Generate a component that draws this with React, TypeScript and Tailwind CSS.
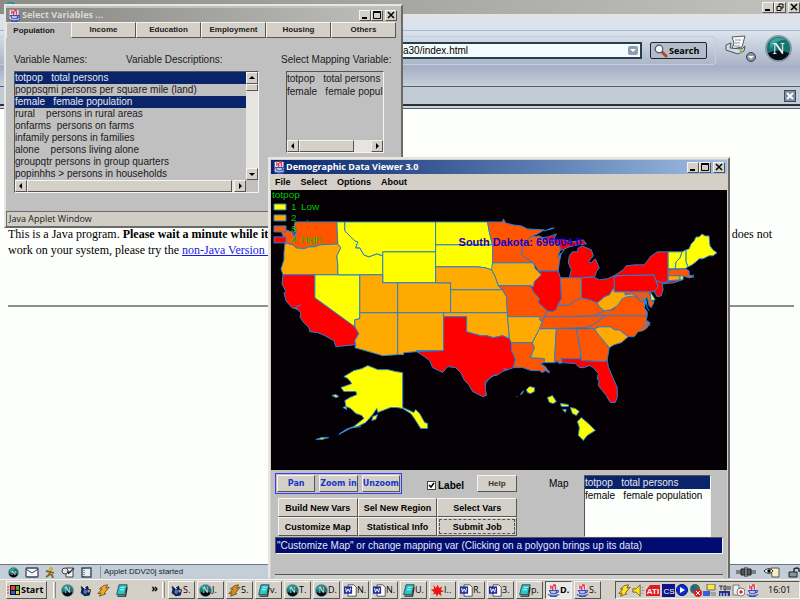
import React from 'react';

type Tone = 'yellow' | 'amber' | 'orange' | 'red';

const toneFill: Record<Tone, string> = {
    yellow: '#ffff00',
    amber: '#ffaa00',
    orange: '#ff5500',
    red: '#ff0000',
};

// One outline per state, in map canvas units
const states: { id: string; tone: Tone; points: string }[] = [
    { id: 'WA', tone: 'orange', points: '295,222 337,222 338,244 327,245 320,245 315,247 309,247 304,249 296,248 293,245 285,243 284,238 281,231 286,230 292,232 294,236 296,233 294,228' },
    { id: 'OR', tone: 'amber', points: '285,243 293,245 296,248 304,249 309,247 315,247 320,245 338,244 341,248 339,253 337,256 338,265 338,275 283,275 281,269 284,260 284,253' },
    { id: 'CA', tone: 'red', points: '283,275 315,275 315,298 355,327 359,334 355,341 356,345 336,347 334,341 325,336 318,333 310,332 309,328 303,322 300,317 301,313 296,309 292,308 286,301 284,293 286,292 282,284' },
    { id: 'NV', tone: 'yellow', points: '315,275 360,275 360,319 355,320 355,327 315,298' },
    { id: 'ID', tone: 'yellow', points: '337,222 345,222 345,231 351,237 355,241 358,242 356,248 360,248 364,255 369,257 377,254 383,256 383,275 338,275 338,265 337,256 341,248 338,244' },
    { id: 'MT', tone: 'yellow', points: '345,222 436,222 436,252 383,252 383,256 377,254 369,257 364,255 360,248 356,248 358,242 355,241 351,237 345,231' },
    { id: 'WY', tone: 'yellow', points: '383,252 436,252 436,283 383,283' },
    { id: 'UT', tone: 'amber', points: '360,275 383,275 383,283 398,283 398,313 360,313' },
    { id: 'CO', tone: 'amber', points: '398,283 451,283 451,313 398,313' },
    { id: 'AZ', tone: 'amber', points: '360,313 398,313 398,355 383,356 355,348 356,345 355,341 359,334 355,327 355,320 360,319' },
    { id: 'NM', tone: 'amber', points: '398,313 444,313 444,351 417,351 417,352 404,353 404,355 398,355' },
    { id: 'ND', tone: 'yellow', points: '436,222 488,222 490,233 493,245 436,245' },
    { id: 'SD', tone: 'yellow', points: '436,245 493,245 493,263 494,268 492,270 486,268 478,267 436,267' },
    { id: 'NE', tone: 'amber', points: '436,267 478,267 486,268 492,270 496,277 499,286 503,290 451,290 451,283 436,283' },
    { id: 'KS', tone: 'amber', points: '451,290 503,290 507,297 508,313 451,313' },
    { id: 'OK', tone: 'amber', points: '444,313 508,313 509,325 510,339 503,336 494,338 487,336 481,336 474,334 467,332 467,317 444,317' },
    { id: 'TX', tone: 'red', points: '444,317 467,317 467,332 474,334 481,336 487,336 494,338 503,336 510,339 512,343 512,350 516,360 514,368 503,372 497,376 494,376 486,382 486,390 487,396 483,397 473,392 469,385 465,381 461,373 456,368 448,367 443,373 439,371 433,368 430,361 422,355 417,352 444,351' },
    { id: 'MN', tone: 'orange', points: '488,222 503,222 504,219 506,223 514,225 522,226 528,229 545,230 538,234 531,237 527,242 523,245 523,250 522,255 528,259 534,263 493,263 493,245 490,233' },
    { id: 'IA', tone: 'amber', points: '493,263 534,263 536,269 542,275 535,282 534,287 531,286 499,286 495,275 492,270' },
    { id: 'MO', tone: 'orange', points: '499,286 531,286 534,292 540,299 539,303 548,311 545,317 543,322 540,320 541,317 508,317 507,297 503,290' },
    { id: 'AR', tone: 'amber', points: '508,317 541,317 540,320 543,322 540,330 536,337 533,343 512,343 510,339' },
    { id: 'LA', tone: 'orange', points: '512,343 533,343 535,348 531,358 545,359 545,363 541,364 546,367 550,373 546,371 543,373 540,371 532,371 523,368 514,368 516,360 512,350' },
    { id: 'MS', tone: 'amber', points: '540,329 557,329 555,363 545,363 545,359 531,358 535,348 533,343 536,337' },
    { id: 'AL', tone: 'orange', points: '557,329 577,329 581,350 581,359 562,359 563,363 560,364 558,361 555,363' },
    { id: 'GA', tone: 'orange', points: '577,329 595,329 600,336 610,348 608,360 606,362 582,361 581,350' },
    { id: 'FL', tone: 'red', points: '562,359 581,359 582,361 606,362 608,360 609,367 614,379 618,388 618,398 616,403 611,403 607,396 603,391 599,386 600,381 598,380 599,374 594,368 590,366 585,368 580,368 576,364 563,363' },
    { id: 'SC', tone: 'amber', points: '595,329 600,327 612,327 615,330 620,330 629,337 622,343 615,345 610,348 600,336' },
    { id: 'NC', tone: 'orange', points: '606,316 648,316 647,321 651,323 648,328 644,331 639,332 635,337 629,337 620,330 615,330 612,327 600,327 595,329 586,328 594,325' },
    { id: 'TN', tone: 'orange', points: '545,317 606,316 594,325 586,328 540,329 543,322' },
    { id: 'KY', tone: 'orange', points: '548,311 553,312 558,306 570,305 575,301 582,298 590,300 598,303 600,307 605,311 595,316 545,317' },
    { id: 'VA', tone: 'orange', points: '595,316 605,311 614,310 618,305 623,298 633,294 637,297 641,301 646,303 645,308 648,312 648,316' },
    { id: 'WV', tone: 'amber', points: '615,287 615,292 626,292 626,295 635,293 637,296 628,297 623,299 618,306 612,310 605,311 600,307 598,303 605,297 610,295' },
    { id: 'MD', tone: 'orange', points: '626,292 650,292 652,301 655,302 652,308 650,306 648,297 645,302 641,301 637,296 632,294 626,295' },
    { id: 'DE', tone: 'yellow', points: '651,292 653,295 656,300 652,301' },
    { id: 'PA', tone: 'red', points: '615,276 655,275 657,281 659,287 655,292 615,292' },
    { id: 'NJ', tone: 'red', points: '657,281 663,283 664,290 662,296 658,297 655,292 659,287' },
    { id: 'NY', tone: 'red', points: '615,276 624,270 627,266 636,265 645,265 649,260 651,257 658,252 669,252 669,281 664,283 657,281 655,275' },
    { id: 'LI', tone: 'red', points: '664,284 671,281 683,280 675,283' },
    { id: 'VT', tone: 'yellow', points: '669,252 683,252 681,258 677,262 676,269 669,269' },
    { id: 'NH', tone: 'yellow', points: '683,252 687,250 687,262 689,267 686,269 676,269 677,262 681,258' },
    { id: 'ME', tone: 'yellow', points: '687,250 690,249 692,244 695,241 697,237 700,237 703,234 706,236 710,236 711,246 714,250 718,253 714,256 710,256 704,259 700,259 697,262 693,265 689,267 687,262' },
    { id: 'MA', tone: 'orange', points: '669,270 686,269 690,271 690,275 695,277 690,278 683,276 669,276' },
    { id: 'CT', tone: 'amber', points: '669,276 681,276 681,280 669,281' },
    { id: 'RI', tone: 'yellow', points: '681,276 684,276 684,280 681,280' },
    { id: 'OH', tone: 'red', points: '582,278 594,277 600,280 608,279 615,276 615,287 610,295 605,297 598,303 590,300 582,298' },
    { id: 'IN', tone: 'orange', points: '561,278 582,278 582,298 575,301 570,305 558,306 562,299' },
    { id: 'IL', tone: 'red', points: '539,271 559,271 561,278 562,299 558,306 557,310 553,312 548,311 539,303 540,299 534,292 531,286 534,287 535,282 542,275' },
    { id: 'WI', tone: 'orange', points: '531,237 540,236 545,239 553,241 560,245 561,250 558,258 562,253 560,262 559,271 539,271 534,263 528,259 522,255 523,250 523,245' },
    { id: 'UP', tone: 'red', points: '541,238 549,237 557,234 554,240 565,240 573,242 584,240 587,244 578,245 570,247 563,250 561,250 560,245 553,241 545,239' },
    { id: 'MI', tone: 'red', points: '570,278 572,270 569,263 570,256 573,252 578,252 579,248 583,246 592,250 594,256 589,262 592,263 596,259 600,268 597,272 596,276 594,277 582,278' },
    { id: 'AK', tone: 'yellow', points: '354,371 362,369 368,366 373,368 378,370 388,370 396,372 403,373 403,408 410,411 414,413 416,410 420,414 425,423 428,424 428,429 421,429 414,418 411,414 403,409 397,408 391,408 383,411 378,413 377,409 373,415 366,423 358,427 350,429 339,435 346,430 354,427 364,419 362,416 356,414 351,409 346,407 345,401 350,398 357,395 356,392 344,392 341,388 352,384 348,379 344,377' },
    { id: 'AK-kodiak', tone: 'yellow', points: '372,421 373,417 378,415 376,420' },
    { id: 'AK-lawrence', tone: 'yellow', points: '332,396 336,395 339,397 336,398' },
    { id: 'AK-nunivak', tone: 'yellow', points: '343,408 346,407 347,410' },
    { id: 'AK-west', tone: 'yellow', points: '316,440 322,438 329,438 322,440' },
    { id: 'HI-1', tone: 'yellow', points: '521,395 524,391 523,394' },
    { id: 'HI-2', tone: 'yellow', points: '527,390 530,387 535,388 535,392 531,394 528,393' },
    { id: 'HI-3', tone: 'yellow', points: '548,398 553,396 557,402 554,404 550,403' },
    { id: 'HI-4', tone: 'yellow', points: '561,404 569,405 569,407 562,407' },
    { id: 'HI-5', tone: 'yellow', points: '571,408 576,409 580,412 577,416 573,414' },
    { id: 'HI-6', tone: 'yellow', points: '578,422 582,418 589,424 596,431 588,436 584,441 579,436 580,428' },
    { id: 'HI-7', tone: 'yellow', points: '563,410 567,410 566,413' },
];

const legend: { tone: Tone; n: string; label: string }[] = [
    { tone: 'yellow', n: '1', label: 'Low' },
    { tone: 'amber', n: '2', label: '.' },
    { tone: 'orange', n: '3', label: '.' },
    { tone: 'red', n: '4', label: 'High' },
];

const variables = [
    { text: 'totpop   total persons', on: true },
    { text: 'poppsqmi persons per square mile (land)', on: false },
    { text: 'female   female population', on: true },
    { text: 'rural    persons in rural areas', on: false },
    { text: 'onfarms  persons on farms', on: false },
    { text: 'infamily persons in families', on: false },
    { text: 'alone    persons living alone', on: false },
    { text: 'groupqtr persons in group quarters', on: false },
    { text: 'popinhhs > persons in households', on: false },
];

const raised = 'border border-t-[#f4f4f0] border-l-[#f4f4f0] border-r-[#555] border-b-[#555] bg-[#d4d0c8]';
const sunken = 'border border-t-[#555] border-l-[#555] border-r-[#f4f4f0] border-b-[#f4f4f0]';

/* ---------- icons ---------- */

const JavaIcon: React.FC = () => (
    <svg width="13" height="13" viewBox="0 0 16 16" className="shrink-0">
        <path d="M2 1h11v13H2z" fill="#e9e6f4" />
        <path d="M8 0c3 2-3 3-1 5 1 1-1 2-1 2M11 1c-3 2 1 3-1 6M4 2c2 1 0 3 1 4" stroke="#e8323c" strokeWidth="1.6" fill="none" />
        <path d="M3 8h9l-1 4H5zM12 8c3-1 3 3-1 3M1 13c4 2 10 2 14 0M4 15.5h8" stroke="#3c4fb0" strokeWidth="1.3" fill="#b9c2ee" />
    </svg>
);

const NetscapeIcon: React.FC<{ size?: number }> = ({ size = 13 }) => (
    <svg width={size} height={size} viewBox="0 0 28 28" className="shrink-0">
        <circle cx="14" cy="14" r="13" fill="#12756f" stroke="#8a98a8" strokeWidth="2" />
        <path d="M5 8a11 11 0 0 1 16-3c-6 0-12 3-15 10z" fill="#3aa59c" />
        <path d="M3 19c7-4 15-4 22 0a12 12 0 0 1-22 0z" fill="#050d12" />
        <text x="14" y="20" textAnchor="middle" fontSize="18" fontFamily="Liberation Serif, serif" fill="#fff">N</text>
    </svg>
);

const NoteIcon: React.FC = () => (
    <svg width="13" height="13" viewBox="0 0 16 16" className="shrink-0">
        <path d="M5 1h10l-3 12H2z" fill="#27c7cc" stroke="#123c48" />
        <path d="M7 4h5M6 7h5" stroke="#eaffff" />
        <path d="M3 15h10l2-11" stroke="#222" fill="none" strokeWidth="1.5" />
    </svg>
);

const WordIcon: React.FC = () => (
    <svg width="13" height="13" viewBox="0 0 16 16" className="shrink-0">
        <path d="M5 1h7l3 3v11H5z" fill="#fff" stroke="#333" />
        <path d="M0 3h10v9H0z" fill="#1c2c9c" />
        <path d="M2 5l1 5 2-4 2 4 1-5" stroke="#fff" fill="none" strokeWidth="1.2" />
    </svg>
);

const BoltIcon: React.FC<{ fill?: string }> = ({ fill = '#ffe12b' }) => (
    <svg width="13" height="13" viewBox="0 0 16 16" className="shrink-0">
        <path d="M8 2l5-1-2 4 4-1-6 7 2 1-8 3 2-4-4 1 5-6H3z" fill={fill} stroke="#6a4a10" strokeWidth="1" />
    </svg>
);

const MouseIcon: React.FC = () => (
    <svg width="13" height="13" viewBox="0 0 16 16" className="shrink-0">
        <path d="M2 2l4 3 5-3 1 4 3 1-2 7-6 1-5-4 1-4z" fill="#14204c" />
        <path d="M7 6l4 3-3 4-3-3z" fill="#3a78d8" />
        <path d="M10 7l4 1-2 3z" fill="#f2a35c" />
        <path d="M6 4l2 2" stroke="#fff" strokeWidth="1.5" />
    </svg>
);

const SplatIcon: React.FC = () => (
    <svg width="13" height="13" viewBox="0 0 16 16" className="shrink-0">
        <path d="M3 1l3 4 2-4 2 4 4-2-2 4 4 2-4 1 1 5-4-3-2 4-1-4-4 1 2-3-4-3 4-1z" fill="#f01414" />
    </svg>
);

const MailIcon: React.FC = () => (
    <svg width="14" height="11" viewBox="0 0 14 11">
        <rect x="1" y="1" width="12" height="9" rx="1" fill="#f3f6fa" stroke="#3c4858" strokeWidth="1.3" />
        <path d="M1 2l6 4 6-4" fill="none" stroke="#3c4858" />
    </svg>
);

const RunnerIcon: React.FC = () => (
    <svg width="10" height="11" viewBox="0 0 10 11">
        <circle cx="6" cy="2" r="2" fill="#dba928" />
        <path d="M1 4l5 1 3 1M5 5l-1 3-3 2M4 7l3 1 1 3" stroke="#7d6420" strokeWidth="1.8" fill="none" />
    </svg>
);

const ComposeIcon: React.FC = () => (
    <svg width="14" height="11" viewBox="0 0 14 11">
        <path d="M5 1h7v9H5z" fill="#f5f6f8" stroke="#444" />
        <circle cx="4" cy="4" r="3" fill="#dde3ea" stroke="#444" />
        <path d="M7 7l6-6M6 5h4" stroke="#333" strokeWidth="1.3" />
    </svg>
);

const BookIcon: React.FC = () => (
    <svg width="11" height="11" viewBox="0 0 11 11">
        <rect x="1" y="1" width="9" height="9" fill="#e8edf2" stroke="#2f3a48" strokeWidth="1.3" />
        <path d="M3 1v9" stroke="#2f3a48" strokeDasharray="1 1" />
    </svg>
);

const PrinterIcon: React.FC = () => (
    <svg width="32" height="28" viewBox="0 0 32 28">
        <path d="M7 2l13-1-3 11-10 2 2-6z" fill="#fbfbfb" stroke="#555c66" />
        <path d="M10 5h6M10 8h5M9 11h6" stroke="#8b929c" />
        <path d="M1 10l5-2-1 5 12 1 3-3-1 5-6 3-12-4z" fill="#d9dde3" stroke="#4b525c" />
        <circle cx="16" cy="16" r="1.5" fill="#7ed321" />
        <circle cx="26" cy="22" r="4.5" fill="#8996a6" stroke="#39424e" />
        <path d="M23 21h6l-3 3z" fill="#fff" />
    </svg>
);

const MagnifierIcon: React.FC = () => (
    <svg width="14" height="14" viewBox="0 0 14 14">
        <path d="M8 8l4 4" stroke="#b2471c" strokeWidth="3" strokeLinecap="round" />
        <circle cx="5" cy="5" r="3.8" fill="#f4f8fc" stroke="#4d5560" strokeWidth="1.2" />
    </svg>
);

const trayIcons: { id: string; art: React.ReactNode }[] = [
    { id: 'power', art: <BoltIcon /> },
    { id: 'volume', art: <svg width="13" height="13" viewBox="0 0 16 16"><path d="M1 6h4l5-5v14l-5-5H1z" fill="#ffe12b" stroke="#5c5010" /><path d="M12 5l2-1M12 8h3M12 11l2 1" stroke="#777" /></svg> },
    { id: 'ati', art: <svg width="14" height="13" viewBox="0 0 14 13"><path d="M4 1h10v11H0V6z" fill="#e01b24" /><text x="7" y="10" textAnchor="middle" fontSize="8" fontWeight="bold" fontFamily="Liberation Sans, sans-serif" fill="#fff">ATI</text></svg> },
    { id: 'cs', art: <svg width="13" height="13" viewBox="0 0 13 13"><path d="M0 0h13v13H0z" fill="#10148c" /><text x="7" y="10" textAnchor="middle" fontSize="8" fontFamily="Liberation Sans, sans-serif" fill="#fff">CS</text></svg> },
    { id: 'player', art: <svg width="12" height="12" viewBox="0 0 12 12"><circle cx="6" cy="6" r="5.5" fill="#0a2be0" stroke="#071454" /><path d="M4 3l5 3-5 3z" fill="#fff" /></svg> },
    { id: 'network', art: <svg width="13" height="13" viewBox="0 0 13 13"><circle cx="6" cy="5" r="5" fill="#24775a" /><path d="M3 1l4 3-4 3z" fill="#2f4fc0" /><circle cx="9" cy="9" r="4" fill="#e01b24" /><path d="M7 7l4 4M11 7l-4 4" stroke="#fff" /></svg> },
    { id: 'monitor', art: <svg width="13" height="13" viewBox="0 0 13 13"><path d="M4 0h8v6H4z" fill="#f9e547" stroke="#666" /><path d="M0 7h7v5H0z" fill="#2a62e0" /><path d="M7 9h6M8 11h5" stroke="#777" /></svg> },
    { id: 'modem', art: <svg width="13" height="13" viewBox="0 0 13 13"><path d="M1 2h4M3 2v4M6 2h2v4H6zM10 2v4M12 2v4" stroke="#333" fill="none" /><path d="M1 7h11v5H1z" fill="#23308f" /><path d="M3 9v3M6 9v3M9 9v3" stroke="#fff" /></svg> },
    { id: 'scan', art: <svg width="13" height="13" viewBox="0 0 13 13"><path d="M1 1h6v10H1z" fill="#eee" stroke="#777" /><circle cx="9" cy="8" r="4" fill="#fff" stroke="#777" /><circle cx="9" cy="8" r="1.7" fill="#e01b24" /></svg> },
    { id: 'java', art: <JavaIcon /> },
];

const tasks: { id: number; icon: React.ReactNode; label: string; active?: boolean }[] = [
    { id: 1, icon: <MouseIcon />, label: 'S.' },
    { id: 2, icon: <NetscapeIcon />, label: 'J.' },
    { id: 3, icon: <BoltIcon fill="#d68a2c" />, label: '5.' },
    { id: 4, icon: <NoteIcon />, label: 'v.' },
    { id: 5, icon: <NetscapeIcon />, label: 'T.' },
    { id: 6, icon: <NetscapeIcon />, label: 'D.' },
    { id: 7, icon: <WordIcon />, label: 'N.' },
    { id: 8, icon: <WordIcon />, label: 'N.' },
    { id: 9, icon: <NoteIcon />, label: 'U.' },
    { id: 10, icon: <SplatIcon />, label: 'I..' },
    { id: 11, icon: <WordIcon />, label: 'R.' },
    { id: 12, icon: <WordIcon />, label: '3.' },
    { id: 13, icon: <NoteIcon />, label: 'p.' },
    { id: 14, icon: <JavaIcon />, label: 'D.', active: true },
    { id: 15, icon: <JavaIcon />, label: 'S.' },
];

/* ---------- shared controls ---------- */

const WindowButtons: React.FC<{ restore?: boolean }> = ({ restore }) => (
    <div className="flex shrink-0">
        <button aria-label="Minimize" className={`flex w-3 h-[11px] items-center justify-center ${raised}`}>
            <svg width="8" height="8" viewBox="0 0 8 8"><path d="M1 6h5v2H1z" /></svg>
        </button>
        <button aria-label="Maximize" className={`flex w-3 h-[11px] items-center justify-center ${raised}`}>
            {restore ? (
                <svg width="8" height="8" viewBox="0 0 8 8" fill="none" stroke="#000"><path d="M3 3V1h4v4H5M1 3.5h4v4H1z" /></svg>
            ) : (
                <svg width="8" height="8" viewBox="0 0 8 8" fill="none" stroke="#000"><path d="M.5 1.5h7v6h-7zM0 .5h8" /></svg>
            )}
        </button>
        <button aria-label="Close" className={`ml-0.5 flex w-3 h-[11px] items-center justify-center ${raised}`}>
            <svg width="8" height="8" viewBox="0 0 8 8" stroke="#000" strokeWidth="1.5"><path d="M1 1l6 6M7 1L1 7" /></svg>
        </button>
    </div>
);

const arrows = {
    up: 'M1 5h6L4 2z',
    down: 'M1 3h6L4 6z',
    left: 'M5 1v6L2 4z',
    right: 'M3 1v6l3-3z',
};

const ScrollArrow: React.FC<{ dir: keyof typeof arrows }> = ({ dir }) => (
    <button aria-label={`Scroll ${dir}`} className={`flex size-3 shrink-0 items-center justify-center ${raised}`}>
        <svg width="8" height="8" viewBox="0 0 8 8"><path d={arrows[dir]} /></svg>
    </button>
);

const Grip: React.FC = () => <span className="h-4 w-[3px] border-x border-l-white border-r-[#8a8a86]" />;

/* ---------- browser ---------- */

const Browser: React.FC = () => (
    <div className="flex flex-1 flex-col bg-[#fdfffd]">
        <div className="flex h-3.5 items-center justify-between bg-linear-to-r from-[#8c8c88] to-[#c2c1bd] pl-1">
            <NetscapeIcon />
            <WindowButtons restore />
        </div>
        <div className="h-[17px] border-b border-[#a8b8cc] bg-linear-to-b from-[#dfe4e8] to-[#d8e1ec]" />
        <div className="flex h-[35px] items-center bg-linear-to-b from-[#dce4ee] to-[#aab3c6]">
            <div className="mt-1 flex h-[29px] flex-1 items-center gap-2 rounded-r border border-[#c4cedc] border-l-transparent pl-[300px] pr-2">
                <div className="flex h-[17px] flex-1 items-center border-2 border-[#24404a] bg-[#f4fbfc] pr-0.5">
                    <input
                        aria-label="Location"
                        defaultValue="a30/index.html"
                        className="min-w-0 flex-1 bg-transparent pl-[100px] font-['Liberation_Sans',sans-serif] text-[10px] text-black outline-none"
                    />
                    <button aria-label="Show history" className="flex h-[9px] w-2.5 items-center justify-center rounded-xs bg-[#8f9db2]">
                        <svg width="6" height="4" viewBox="0 0 6 4"><path d="M0 0h6L3 3z" fill="#fff" /></svg>
                    </button>
                </div>
                <button className="flex h-[17px] w-[57px] items-center gap-px rounded-xs border border-[#20242c] bg-[#b4bccb] pl-[3px] font-['Open_Sans','Noto_Sans',sans-serif] text-[9px] font-bold text-black">
                    <MagnifierIcon />
                    Search
                </button>
            </div>
            <div className="flex w-[84px] items-center gap-2 pl-[9px]">
                <button aria-label="Print"><PrinterIcon /></button>
                <NetscapeIcon size={27} />
            </div>
        </div>
        <div className="h-5 bg-linear-to-b from-[#a3aec6] to-[#c6d1da]" />
        <div className="flex h-5 items-center justify-end border-y border-t-[#56606a] border-b-2 border-b-[#2c3238] bg-[#c3ccd6] pr-1">
            <button aria-label="Close sidebar" className="flex size-3 items-center justify-center border border-[#3e4c60] bg-[#7f8ea4]">
                <svg width="8" height="8" viewBox="0 0 8 8" stroke="#fff" strokeWidth="1.8"><path d="M1 1l6 6M7 1L1 7" /></svg>
            </button>
        </div>
        <div className="h-[3px] border-b border-[#58606a] bg-[#c9d3dc]" />

        <main className="flex-1 px-2 pt-[117px] font-['Liberation_Serif',serif] text-[12px] leading-4 text-black">
            <div className="flex justify-between pr-5">
                <p>
                    This is a Java program. <b>Please wait a minute while it</b>
                    <br />
                    work on your system, please try the{' '}
                    <a href="#nojava" className="text-[#1a1ae6] underline">non-Java Version 2</a>
                </p>
                <p>does not</p>
            </div>
            <hr className="-mr-0.5 mt-[47px] border-t-2 border-[#8f8f8f]" />
        </main>

        <div className="flex h-[15px] items-center border-t border-[#6c7680] bg-[#c3ced8] px-2">
            <div className="flex w-[84px] items-center justify-between">
                <NetscapeIcon size={11} />
                <MailIcon />
                <RunnerIcon />
                <ComposeIcon />
                <BookIcon />
            </div>
            <span className="ml-2 flex-1 border-l border-[#8794a2] pl-[3px] font-['Liberation_Sans',sans-serif] text-[8px] leading-3 text-[#1c242c]">Applet DDV20j started</span>
            <div className="-mr-2 flex items-center gap-2">
                <svg width="20" height="10" viewBox="0 0 20 10"><path d="M0 4h6M0 6h6M14 4h6M14 6h6" stroke="#333" /><path d="M5 2h4v6H5zM11 2h4v6h-4zM8 1h4M8 9h4" fill="#555" stroke="#222" /></svg>
                <svg width="16" height="11" viewBox="0 0 16 11"><path d="M7 1h8v9H8z" fill="#f5f0c4" stroke="#555" /><path d="M0 4c3-3 7-3 9 0-2 3-6 3-9 0z" fill="#fff" stroke="#222" /><circle cx="5" cy="4" r="1.7" /></svg>
                <svg width="12" height="11" viewBox="0 0 12 11"><path d="M1 5h8v5H1z" fill="#8695a6" stroke="#222" /><path d="M6 5V2q3-2 5 0v3" fill="none" stroke="#222" strokeWidth="1.4" /></svg>
            </div>
        </div>
    </div>
);

/* ---------- applet windows ---------- */

const SelectVariables: React.FC = () => (
    <section className="absolute left-1 top-1 w-[399px] border-2 border-t-[#e8e6e0] border-l-[#e8e6e0] border-r-[#6a6a68] border-b-[#6a6a68] bg-[#c1c0c0] font-['Liberation_Sans',sans-serif] text-[10px] leading-3 text-[#1a1a1a]">
        <header className="mt-0.5 flex h-3.5 items-center bg-linear-to-r from-[#858583] to-[#c0c0bd] pl-0.5 pr-1">
            <JavaIcon />
            <h2 className="flex-1 pl-px font-['Open_Sans','Noto_Sans',sans-serif] text-[9px] font-bold leading-3 text-[#dcdad4]">Select Variables ...</h2>
            <WindowButtons />
        </header>
        <nav role="tablist" className="grid w-[390px] grid-cols-6 text-[8px] leading-3">
            <button role="tab" aria-selected="true" className="h-4 border-l border-t border-[#eceae4] pr-2.5 font-bold">Population</button>
            <button role="tab" className={`h-4 font-bold ${raised}`}>Income</button>
            <button role="tab" className={`h-4 font-bold ${raised}`}>Education</button>
            <button role="tab" className={`h-4 font-bold ${raised}`}>Employment</button>
            <button role="tab" className={`h-4 font-bold ${raised}`}>Housing</button>
            <button role="tab" className={`h-4 font-bold ${raised}`}>Others</button>
        </nav>

        <div className="flex items-start pl-2 pt-4">
            <div className="w-[245px]">
                <div className="flex">
                    <span id="names" className="w-28">Variable Names:</span>
                    <span>Variable Descriptions:</span>
                </div>
                <div className={`mt-[5px] flex h-[122px] ${sunken}`}>
                    <div className="flex min-w-0 flex-1 flex-col">
                        <ul role="listbox" aria-labelledby="names" aria-multiselectable="true" className="flex-1">
                            {variables.map((v) => (
                                <li
                                    key={v.text}
                                    role="option"
                                    aria-selected={v.on}
                                    className={`whitespace-pre ${v.on ? 'bg-[#0a246a] text-[#e6e8f4]' : ''}`}
                                >
                                    {v.text}
                                </li>
                            ))}
                        </ul>
                        <div className="flex bg-[#e6e4de]">
                            <ScrollArrow dir="left" />
                            <span className={`mr-auto w-[205px] ${raised}`} />
                            <ScrollArrow dir="right" />
                        </div>
                    </div>
                    <div className="mb-3 flex w-3 flex-col bg-[#e6e4de]">
                        <ScrollArrow dir="up" />
                        <span className={`mb-auto h-[7px] ${raised}`} />
                        <ScrollArrow dir="down" />
                    </div>
                </div>
            </div>
            <div className="ml-[22px]">
                <span id="mapping">Select Mapping Variable:</span>
                <div className={`ml-[5px] mt-[5px] flex h-[82px] w-[98px] flex-col ${sunken}`}>
                    <ul role="listbox" aria-labelledby="mapping" className="flex-1 whitespace-pre leading-[13px]">
                        <li role="option" aria-selected="false">totpop   total persons</li>
                        <li role="option" aria-selected="false">female   female popul</li>
                    </ul>
                    <div className="flex bg-[#e6e4de]">
                        <ScrollArrow dir="left" />
                        <span className={`mr-auto w-[55px] ${raised}`} />
                        <ScrollArrow dir="right" />
                    </div>
                </div>
            </div>
        </div>

        <footer className="mt-[18px] h-[15px] border-l border-t border-[#6a6a68] bg-[#cfcdc6] pl-0.5 font-['Open_Sans','Noto_Sans',sans-serif] text-[9px] leading-[14px]">
            Java Applet Window
        </footer>
    </section>
);

const CountryMap: React.FC = () => (
    <svg viewBox="271 190 457 281" className="block w-full bg-[#040004]" role="img" aria-label="totpop by state">
        <g stroke="#2a7fd4" strokeWidth="1" strokeLinejoin="round">
            {states.map((s) => (
                <polygon key={s.id} points={s.points} fill={toneFill[s.tone]} />
            ))}
            {/* lakes, sounds and ragged coast lines */}
            <path
                d="M292,228l4,3-3,2 4,2-3,2 1,4M296,307l5-2M298,309l-3-1M545,231l8-3M549,230l6-2M562,254l3-4M641,296l5,6-1,6 3,6M645,297l2,8M647,300l1,8 2,3M643,325l6-4M642,329l7-5M648,322l3,4M690,278l5-3M541,366l8,7 1,-2M485,385l4-5 3-3 5-2M504,369l4,1M340,434l10-5M354,428l7-1M517,397h1M556,362l6,1"
                fill="none"
                stroke="#2a8cf0"
            />
            {legend.map((l, i) => (
                <rect key={l.n} x="274" y={204 + i * 11} width="12" height="6" fill={toneFill[l.tone]} />
            ))}
        </g>
        <g fill="#00c400" fontFamily="Liberation Sans, sans-serif" fontSize="10">
            <text x="272" y="198">totpop</text>
            {legend.map((l, i) => (
                <React.Fragment key={l.n}>
                    <text x="291" y={210 + i * 11}>{l.n}</text>
                    <text x={l.label === '.' ? 306 : 301} y={210 + i * 11}>{l.label}</text>
                </React.Fragment>
            ))}
        </g>
        <text x="459" y="246" fill="#1a00c8" fontFamily="Liberation Sans, sans-serif" fontSize="11" fontWeight="bold">South Dakota: 696004.0</text>
    </svg>
);

const DataViewer: React.FC = () => (
    <section className="absolute left-[268px] top-[157px] w-[462px] border-2 border-b-0 border-t-[#e8e6e0] border-l-[#e8e6e0] border-r-[#6a6a68] bg-[#d4d0c8] p-px pb-0 font-['Liberation_Sans',sans-serif] text-[10px] leading-3 text-black">
        <header className="flex h-3.5 items-center bg-linear-to-r from-[#0a246a] to-[#a0bfe4] pl-0.5 pr-0.5">
            <JavaIcon />
            <h2 className="flex-1 font-['Open_Sans','Noto_Sans',sans-serif] text-[9px] font-bold leading-3 text-white">Demographic Data Viewer 3.0</h2>
            <WindowButtons />
        </header>
        <nav className="flex h-4 items-center gap-2.5 pl-1 text-[9px] font-bold">
            <button>File</button>
            <button>Select</button>
            <button>Options</button>
            <button>About</button>
        </nav>
        <CountryMap />
        <div className="bg-[#c1c0c0] px-1 pt-[3px]">
            <div className="flex">
                <div className="w-[242px]">
                    <div className="flex items-center">
                        <div className="flex h-[21px] w-[127px] gap-1 border border-[#3c3cf0] p-px font-['DejaVu_Sans',sans-serif] text-[8px] font-bold text-[#1438c8]">
                            <button className={`flex w-[39px] items-center justify-center whitespace-nowrap ${raised}`}>Pan</button>
                            <button className={`flex w-[39px] items-center justify-center whitespace-nowrap ${raised}`}>Zoom in</button>
                            <button className={`flex w-[39px] items-center justify-center whitespace-nowrap ${raised}`}>Unzoom</button>
                        </div>
                        <label className="ml-[25px] flex items-center gap-0.5 pt-1 font-bold">
                            <input type="checkbox" defaultChecked className="peer sr-only" />
                            <span className="flex size-[9px] items-center justify-center border border-[#444] bg-white [&>svg]:invisible peer-checked:[&>svg]:visible">
                                <svg width="7" height="7" viewBox="0 0 7 7" fill="none" stroke="#000" strokeWidth="1.5"><path d="M1 3l2 2 3-4" /></svg>
                            </span>
                            Label
                        </label>
                        <button className={`ml-auto h-[17px] w-10 shrink-0 text-[8px] font-bold text-[#333] ${raised}`}>Help</button>
                    </div>
                    <div className="ml-[3px] mt-1 grid grid-cols-3 text-[9px] font-bold">
                        <button className={`h-[19px] whitespace-nowrap ${raised}`}>Build New Vars</button>
                        <button className={`h-[19px] whitespace-nowrap ${raised}`}>Sel New Region</button>
                        <button className={`h-[19px] whitespace-nowrap ${raised}`}>Select Vars</button>
                        <button className={`h-[19px] whitespace-nowrap ${raised}`}>Customize Map</button>
                        <button className={`h-[19px] whitespace-nowrap ${raised}`}>Statistical Info</button>
                        <button className={`h-[19px] whitespace-nowrap p-px ${raised}`}>
                            <span className="flex h-full items-center justify-center border border-dashed border-[#555]">Submit Job</span>
                        </button>
                    </div>
                </div>
                <span id="map-list" className="ml-8 pt-[5px]">Map</span>
                <ul role="listbox" aria-labelledby="map-list" className={`ml-auto mr-3 mt-[2px] h-[62px] w-[127px] whitespace-pre bg-[#fdfffd] leading-[13px] ${sunken}`}>
                    <li role="option" aria-selected="true" className="bg-[#0a246a] text-[#e6e8f4]">totpop   total persons</li>
                    <li role="option" aria-selected="false">female   female population</li>
                </ul>
            </div>
            <input
                readOnly
                aria-label="Hint"
                value={'"Customize Map" or change mapping var (Clicking on a polygon brings up its data)'}
                className={`block h-[17px] w-full bg-[#000c70] pl-px text-[10px] text-[#e6e8f4] ${sunken}`}
            />
            <div className="mt-5 h-1 border-t border-[#555] bg-[#cfcdc6]" />
        </div>
    </section>
);

/* ---------- taskbar ---------- */

const Taskbar: React.FC = () => (
    <footer className="relative flex h-[21px] items-center border-t border-[#f4f4f0] bg-[#d4d0c8] pl-1.5 font-['Open_Sans','Noto_Sans',sans-serif] text-[9px] leading-3 text-black">
        <button className={`flex h-[18px] w-[41px] items-center gap-px font-bold ${raised}`}>
            <svg width="13" height="12" viewBox="0 0 13 12" className="shrink-0">
                <path d="M3 1h10v10H3z" fill="#111" />
                <path d="M4 2h4v4H4z" fill="#e8412a" />
                <path d="M9 2h3v4H9z" fill="#3cae3c" />
                <path d="M4 7h4v3H4z" fill="#2a5ce0" />
                <path d="M9 7h3v3H9z" fill="#f4d22b" />
                <path d="M0 3h2M0 6h2M0 9h2" stroke="#c33" />
            </svg>
            Start
        </button>
        <div className="flex items-center gap-[5px] pl-1.5">
            <Grip />
            <NetscapeIcon />
            <MouseIcon />
            <BoltIcon fill="#f4a62a" />
            <NoteIcon />
        </div>
        <span className="ml-auto pb-1 pr-1 text-[11px] font-bold">»</span>
        <Grip />
        <div className="ml-[3px] flex gap-0.5">
            {tasks.map((t) => (
                <button
                    key={t.id}
                    className={`flex h-[18px] w-[27px] items-center overflow-hidden pl-px ${t.active ? `font-bold bg-[#ebe9e4] ${sunken}` : raised}`}
                >
                    {t.icon}
                    {t.label}
                </button>
            ))}
        </div>
        <div className={`ml-3.5 flex h-[18px] w-[185px] items-center pl-0.5 ${sunken}`}>
            <div className="flex w-[141px] items-center justify-between">
                {trayIcons.map((t) => (
                    <React.Fragment key={t.id}>{t.art}</React.Fragment>
                ))}
            </div>
            <span className="ml-[9px]">16:01</span>
        </div>
    </footer>
);

const App: React.FC = () => {
    return (
        <div className="relative flex min-h-screen flex-col overflow-hidden">
            <Browser />
            <SelectVariables />
            <DataViewer />
            <Taskbar />
        </div>
    );
};

export default App;
